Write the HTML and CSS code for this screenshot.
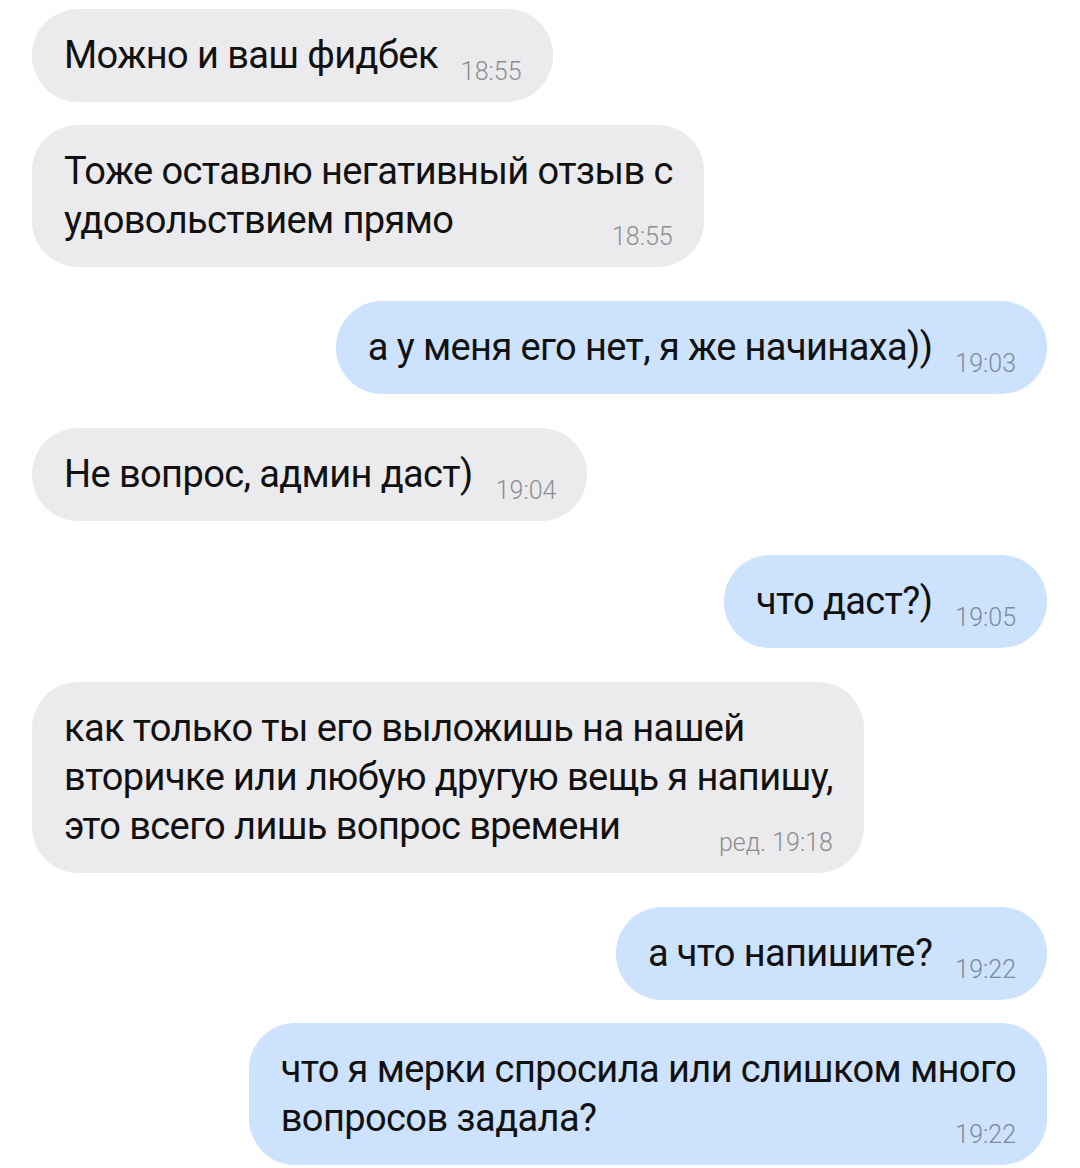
FILE: index.html
```html
<!DOCTYPE html>
<html lang="ru">
<head>
  <meta charset="UTF-8">
  <title>Чат</title>
  <link rel="stylesheet" href="styles.css">
</head>

<body>

  <div class="chat">

    <div class="group in">
      <div class="bubble">
        <div class="last"><span>Можно и ваш фидбек</span><span class="time">18:55</span></div>
      </div>
      <div class="bubble">
        <div class="line">Тоже оставлю негативный отзыв с</div>
        <div class="last"><span>удовольствием прямо</span><span class="time">18:55</span></div>
      </div>
    </div>

    <div class="group out">
      <div class="bubble">
        <div class="last"><span>а у меня его нет, я же начинаха))</span><span class="time">19:03</span></div>
      </div>
    </div>

    <div class="group in">
      <div class="bubble">
        <div class="last"><span>Не вопрос, админ даст)</span><span class="time">19:04</span></div>
      </div>
    </div>

    <div class="group out">
      <div class="bubble">
        <div class="last"><span>что даст?)</span><span class="time">19:05</span></div>
      </div>
    </div>

    <div class="group in">
      <div class="bubble">
        <div class="line">как только ты его выложишь на нашей</div>
        <div class="line">вторичке или любую другую вещь я напишу,</div>
        <div class="last"><span>это всего лишь вопрос времени</span><span class="time">ред. 19:18</span></div>
      </div>
    </div>

    <div class="group out">
      <div class="bubble">
        <div class="last"><span>а что напишите?</span><span class="time">19:22</span></div>
      </div>
      <div class="bubble">
        <div class="line">что я мерки спросила или слишком много</div>
        <div class="last"><span>вопросов задала?</span><span class="time">19:22</span></div>
      </div>
    </div>

  </div>

</body>
</html>
```

FILE: styles.css
```css
body {
  margin: 0;
  padding: 0;
  background: #ffffff;
  font-family: Roboto, 'Noto Sans', sans-serif;
  color: #111111;
}
.chat {
  display: flex;
  flex-direction: column;
  gap: 34px;
  padding: 9px 33px 0 32px;
}
.group {
  display: flex;
  flex-direction: column;
  gap: 23px;
}
.group.in {
  align-items: flex-start;
}
.group.out {
  align-items: flex-end;
}
.bubble {
  padding: 22px 31px 22px 32px;
  border-radius: 46px;
  background: #ebebee;
  font-size: 38px;
  line-height: 49px;
  letter-spacing: -0.6px;
  white-space: nowrap;
}
.out .bubble {
  background: #cde2fc;
}
.last {
  display: flex;
  justify-content: space-between;
  align-items: flex-end;
  gap: 23px;
}
.time {
  font-size: 25px;
  line-height: 1;
  font-weight: 300;
  letter-spacing: 0;
  color: #8e8e8e;
  margin-bottom: -4px;
}
.out .time {
  color: #7e8b9b;
}
```
